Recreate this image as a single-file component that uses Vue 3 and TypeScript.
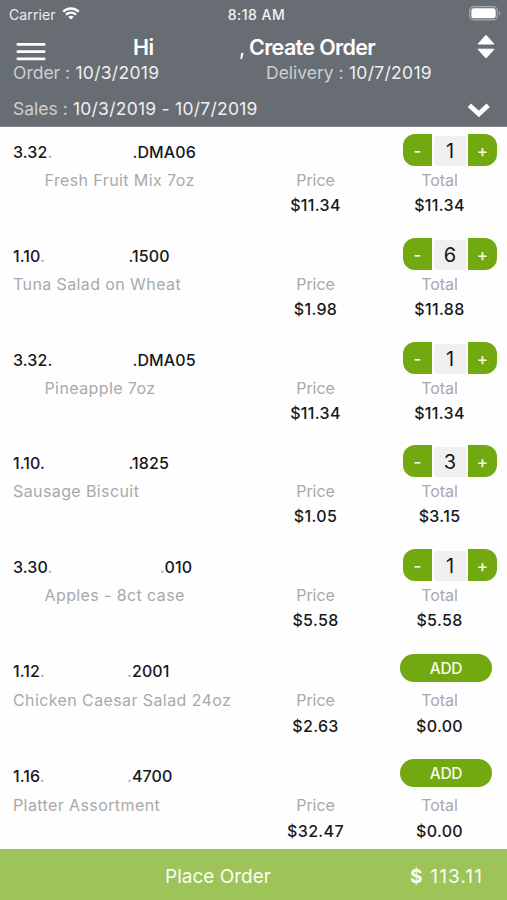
<script setup lang="ts">
import { computed, ref } from 'vue'

interface OrderItem {
  prefix: string
  dot: 'dark' | 'soft'
  suffix: string
  tailDot: 'dark' | 'soft'
  tailStart: number
  name: string
  indented?: boolean
  price: number
  quantity: number
}

const items = ref<OrderItem[]>([
  { prefix: '3.32', dot: 'soft', suffix: 'DMA06', tailDot: 'dark', tailStart: 119.5, name: 'Fresh Fruit Mix 7oz', indented: true, price: 11.34, quantity: 1 },
  { prefix: '1.10', dot: 'soft', suffix: '1500', tailDot: 'dark', tailStart: 115.5, name: 'Tuna Salad on Wheat', price: 1.98, quantity: 6 },
  { prefix: '3.32', dot: 'dark', suffix: 'DMA05', tailDot: 'dark', tailStart: 119.5, name: 'Pineapple 7oz', indented: true, price: 11.34, quantity: 1 },
  { prefix: '1.10', dot: 'dark', suffix: '1825', tailDot: 'dark', tailStart: 115.5, name: 'Sausage Biscuit', price: 1.05, quantity: 3 },
  { prefix: '3.30', dot: 'soft', suffix: '010', tailDot: 'soft', tailStart: 147, name: 'Apples - 8ct case', indented: true, price: 5.58, quantity: 1 },
  { prefix: '1.12', dot: 'soft', suffix: '2001', tailDot: 'soft', tailStart: 114, name: 'Chicken Caesar Salad 24oz', price: 2.63, quantity: 0 },
  { prefix: '1.16', dot: 'soft', suffix: '4700', tailDot: 'soft', tailStart: 114, name: 'Platter Assortment', price: 32.47, quantity: 0 },
])

const otherItemsTotal = 69.82
const orderTotal = computed(() =>
  (items.value.reduce((sum, item) => sum + item.price * item.quantity, 0) + otherItemsTotal).toFixed(2),
)

function change(item: OrderItem, step: number): void {
  item.quantity = Math.max(0, item.quantity + step)
}
</script>

<template>
  <div class="screen">
    <header class="header">
      <div class="status">
        <div class="carrier">
          <span>Carrier</span>
          <svg class="wifi" viewBox="0 0 18 13" fill="none" stroke="#fff" stroke-width="2.3">
            <path d="M1.2 4.7C5.6.4 12.4.4 16.8 4.7" />
            <path d="M4 7.7c2.8-2.7 7.2-2.7 10 0" />
            <path d="M9 12.6 6.3 9.9c1.5-1.4 3.9-1.4 5.4 0Z" fill="#fff" stroke="none" />
          </svg>
        </div>
        <span class="clock">8:18 AM</span>
        <svg class="battery" viewBox="0 0 32 15">
          <rect x=".7" y=".7" width="27.6" height="13.2" rx="4" fill="none" stroke="#a5aaae" stroke-width="1.2" />
          <rect x="2.3" y="2.3" width="24.4" height="10" rx="2.4" fill="#fff" />
          <path d="M30 5v4.5c1.6-.6 1.6-3.9 0-4.5Z" fill="#a5aaae" />
        </svg>
      </div>
      <div class="navbar">
        <svg class="menu" viewBox="0 0 30 20" stroke="#fff" stroke-width="2.7" stroke-linecap="round">
          <path d="M1.8 2.4h26.4M1.8 9.6h26.4M1.8 16.8h26.4" />
        </svg>
        <h1 class="title"><span class="hi">Hi</span><span class="comma">,</span><span>Create Order</span></h1>
        <svg class="sort" viewBox="0 0 20 26" fill="#fff" stroke="#fff" stroke-width="1" stroke-linejoin="round">
          <path d="M10 1.3 18 10H2ZM2 15.2h16L10 24Z" />
        </svg>
      </div>
      <div class="dates">
        <span class="order-date"><i>Order :</i> 10/3/2019</span>
        <span class="delivery-date"><i>Delivery :</i> 10/7/2019</span>
      </div>
      <div class="sales">
        <span class="sales-date"><i>Sales :</i> 10/3/2019 - 10/7/2019</span>
        <svg class="chevron" viewBox="0 0 24 16" fill="none" stroke="#fff" stroke-width="4.8">
          <path d="m2.4 3.2 9.4 8.8 9.4-8.8" />
        </svg>
      </div>
    </header>

    <main class="list">
      <article v-for="item in items" :key="item.name" class="item" :class="{ empty: item.quantity === 0 }">
        <div class="top">
          <div class="sku">
            <span class="sku-head" :style="{ width: item.tailStart + 'px' }">{{ item.prefix }}<b :class="item.dot">.</b></span>
            <span class="sku-tail"><b :class="item.tailDot">.</b>{{ item.suffix }}</span>
          </div>
          <div v-if="item.quantity > 0" class="stepper">
            <button class="minus" @click="change(item, -1)">-</button>
            <span class="quantity">{{ item.quantity }}</span>
            <button class="plus" @click="change(item, 1)">+</button>
          </div>
          <button v-else class="add" @click="change(item, 1)">ADD</button>
        </div>
        <div class="details">
          <span class="name" :class="{ indented: item.indented }">{{ item.name }}</span>
          <div class="amount">
            <span class="label">Price</span>
            <span class="value">${{ item.price.toFixed(2) }}</span>
          </div>
          <div class="amount">
            <span class="label">Total</span>
            <span class="value">${{ (item.price * item.quantity).toFixed(2) }}</span>
          </div>
        </div>
      </article>
    </main>

    <footer class="footer">
      <span class="place">Place Order</span>
      <span class="sum"><b>$</b><span class="figure">{{ orderTotal }}</span></span>
    </footer>
  </div>
</template>

<style>
body {
  margin: 0;
  background: #fff;
}
</style>

<style scoped>
.screen {
  box-sizing: border-box;
  display: flex;
  flex-direction: column;
  width: 507px;
  height: 900px;
  overflow: hidden;
  background: #fefefe;
  font-family: Inter, "Liberation Sans", sans-serif;
  color: #17171a;
}
.screen * {
  box-sizing: border-box;
}
svg {
  display: block;
  flex: none;
}
span {
  white-space: nowrap;
}
button {
  border: 0;
  padding: 0;
  font: inherit;
  color: #f4faea;
  background: #72a910;
}
.header {
  flex: none;
  height: 127px;
  background: #676d73;
  border-bottom: 1px solid #80858a;
  color: #fff;
}
.status {
  display: grid;
  grid-template-columns: 1fr auto 1fr;
  align-items: center;
  height: 28px;
  padding: 0 6px 0 9px;
  font-size: 14px;
}
.carrier {
  display: flex;
  align-items: center;
  gap: 6px;
  color: #eceded;
  letter-spacing: 0.1px;
}
.wifi {
  width: 18px;
  height: 13px;
  margin-top: -2px;
}
.clock {
  padding-left: 3px;
  font-weight: 550;
  letter-spacing: 0.45px;
  color: #f3f4f4;
}
.battery {
  width: 32px;
  height: 15px;
  justify-self: end;
  margin-top: -2px;
}
.navbar {
  display: flex;
  height: 36px;
  padding: 0 11px 0 16px;
  align-items: flex-start;
}
.menu {
  width: 30px;
  height: 20px;
  margin-top: 14px;
}
.title {
  display: flex;
  flex: 1;
  margin: 5px 0 0 87px;
  font-size: 21.5px;
  line-height: 28px;
  font-weight: 600;
  letter-spacing: -0.65px;
}
.hi {
  width: 106px;
}
.comma {
  width: 10px;
  font-weight: 400;
}
.sort {
  width: 20px;
  height: 26px;
  margin-top: 6px;
}
i {
  font-style: normal;
  color: #cdcfd1;
  letter-spacing: 0;
}
.dates {
  display: grid;
  grid-template-columns: 253px 1fr;
  height: 20px;
  padding-left: 13px;
  margin-top: -1px;
  font-size: 17.5px;
  line-height: 20px;
  letter-spacing: 0.3px;
  color: #eff0f1;
}
.sales {
  display: flex;
  justify-content: space-between;
  align-items: center;
  margin-top: 13px;
  height: 24px;
  padding: 0 16px 0 13px;
  font-size: 17.5px;
  letter-spacing: 0.25px;
  color: #eff0f1;
}
.chevron {
  width: 24px;
  height: 16px;
  margin-top: 4px;
}
.list {
  flex: 1;
  min-height: 0;
  overflow: hidden;
}
.item {
  height: 103.8px;
  padding: 7px 10px 0 13px;
}
.item.empty {
  height: 105px;
}
.top {
  display: flex;
  justify-content: space-between;
  height: 34px;
}
.sku {
  display: flex;
  height: 36px;
  line-height: 36px;
  font-size: 16px;
  font-weight: 550;
  letter-spacing: 0.1px;
}
.sku b {
  font-weight: inherit;
}
.sku .soft {
  color: #a9a9a9;
}
.stepper {
  display: flex;
  width: 94px;
  height: 32px;
  justify-content: space-between;
  align-items: stretch;
}
.stepper button {
  width: 29px;
  padding-top: 3px;
  font-size: 17px;
  font-weight: 500;
  line-height: 29px;
}
.stepper .minus {
  border-radius: 12px 0 0 12px;
}
.stepper .plus {
  border-radius: 0 12px 12px 0;
}
.quantity {
  width: 33px;
  margin-top: 2px;
  border-radius: 3px;
  background: #f0f0f1;
  text-align: center;
  font-size: 20px;
  line-height: 31px;
}
.add {
  width: 92px;
  height: 28px;
  margin: 1px 5px 0 0;
  padding-top: 1px;
  border-radius: 14px;
  font-size: 15.5px;
  font-weight: 500;
  letter-spacing: -0.3px;
}
.details {
  display: grid;
  grid-template-columns: 240.5px 124px 124px;
  line-height: 25px;
  font-size: 16px;
}
.empty .details {
  padding-top: 1px;
}
.name,
.label {
  color: #a9a9aa;
}
.name {
  letter-spacing: 0.4px;
}
.indented {
  padding-left: 31.5px;
}
.amount {
  display: flex;
  flex-direction: column;
  align-items: center;
}
.label {
  letter-spacing: -0.1px;
}
.value {
  font-weight: 550;
  letter-spacing: 0.35px;
}
.empty .value {
  line-height: 27px;
}
.footer {
  flex: none;
  display: flex;
  justify-content: space-between;
  align-items: center;
  height: 51px;
  padding: 3px 24px 0 165px;
  background: #9ec359;
  color: #fbfdf5;
  font-size: 19px;
}
.sum {
  display: flex;
  gap: 8px;
}
.figure {
  letter-spacing: 1.1px;
}
</style>
